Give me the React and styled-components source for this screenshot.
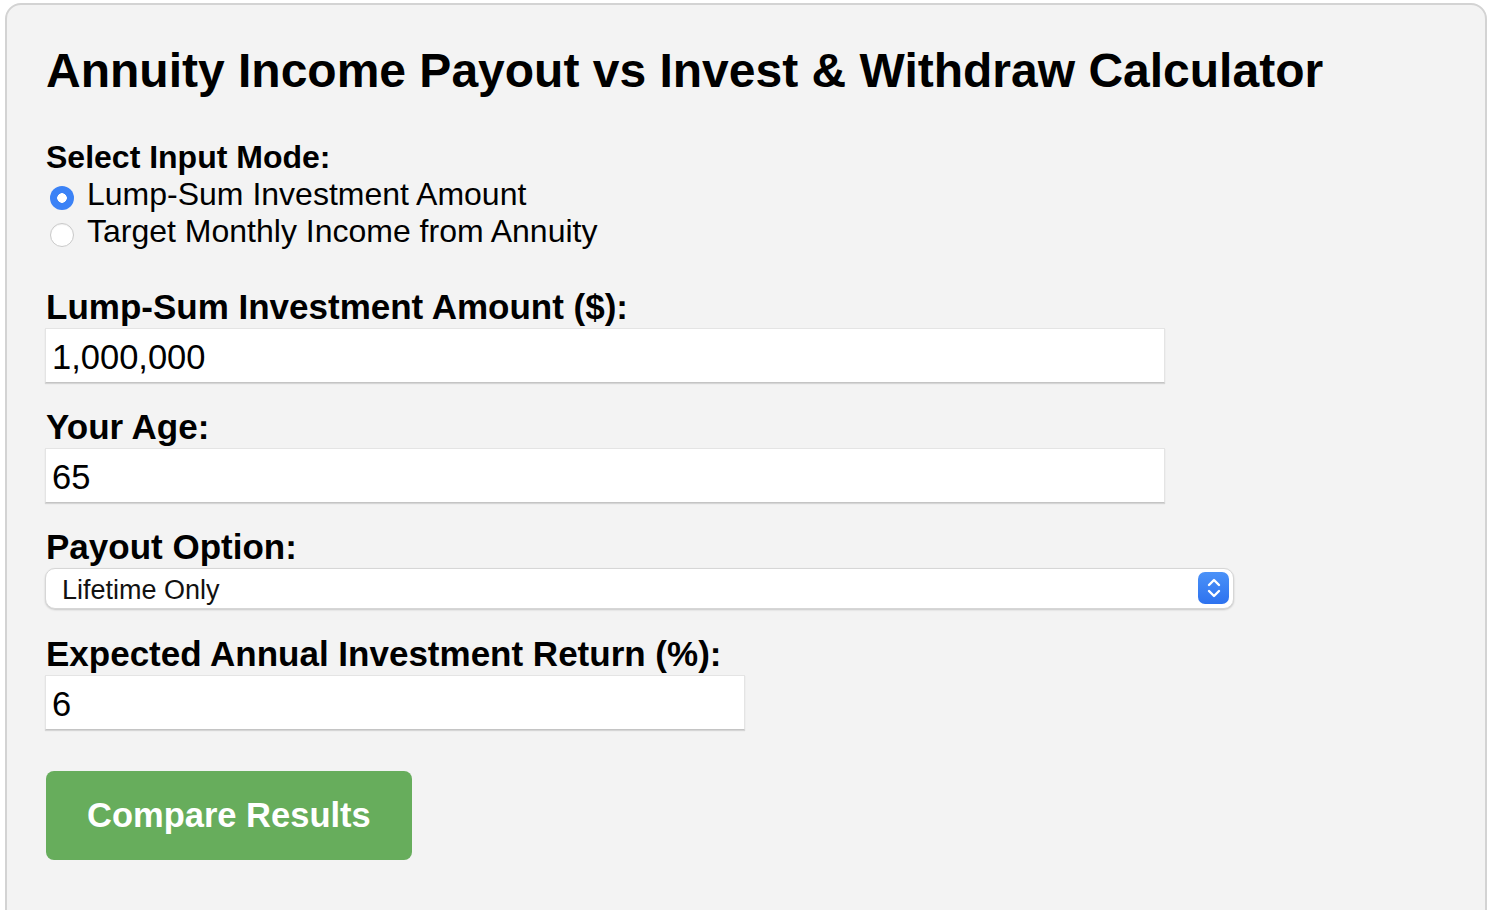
import React, { useState } from 'react'
import styled, { createGlobalStyle } from 'styled-components';

const GlobalStyle = createGlobalStyle`
    body {
        margin: 0;
        background: #ffffff;
        font-family: "Liberation Sans", Arial, sans-serif;
        color: #000;
    }
`;
const Card = styled.div`
    margin: 3px 7px 0 5px;
    min-height: 960px;
    box-sizing: border-box;
    border: 2px solid #d3d3d3;
    border-radius: 16px;
    background: #f3f3f3;
    padding: 38px 39px;
`;
const Title = styled.h2`
    margin: 0 0 41px;
    font-size: 48px;
    font-weight: bold;
    line-height: normal;
`;
const ModeBlock = styled.div`
    font-size: 32px;
    line-height: normal;
    margin-bottom: 37px;
`;
const ModeTitle = styled.div`
    font-weight: bold;
`;
const RadioRow = styled.label`
    display: flex;
    align-items: center;
    gap: 13px;
    padding-left: 4px;
`;
const Radio = styled.input`
    appearance: none;
    margin: 6px 0 0;
    width: 24px;
    height: 24px;
    border-radius: 50%;
    box-sizing: border-box;
    background: #fff;
    border: 1px solid #c9c9c9;
    box-shadow: inset 0 1px 1px rgba(0,0,0,0.06);
    &:checked {
        border: none;
        background: radial-gradient(circle, #fff 0 4.5px, #3b82f6 5px);
        box-shadow: none;
    }
`;
const Field = styled.div`
    margin-bottom: ${p => p.gap || 24}px;
`;
const Label = styled.label`
    display: block;
    font-size: 35px;
    font-weight: bold;
    line-height: normal;
    margin-bottom: 1px;
`;
const TextInput = styled.input`
    display: block;
    box-sizing: border-box;
    width: ${p => p.w}px;
    height: 55px;
    margin-left: -1px;
    padding: 3px 6px 0;
    font-family: "Liberation Sans", Arial, sans-serif;
    font-size: 34.5px;
    color: #000;
    background: #fff;
    border: 1px solid #e4e4e4;
    border-bottom: 1px solid #c4c4c4;
    box-shadow: 0 1px 1px rgba(0,0,0,0.12);
    outline: none;
`;
const SelectWrap = styled.div`
    position: relative;
    width: 1189px;
    margin-left: -1px;
    margin-bottom: 2px;
`;
const Select = styled.select`
    appearance: none;
    display: block;
    box-sizing: border-box;
    width: 100%;
    height: 41px;
    padding: 2px 16px 0;
    font-family: "Liberation Sans", Arial, sans-serif;
    font-size: 27px;
    color: #111;
    background: #fff;
    border: 1px solid #d6d6d6;
    border-radius: 10px;
    box-shadow: 0 1px 2px rgba(0,0,0,0.18);
    outline: none;
`;
const Stepper = styled.div`
    position: absolute;
    top: 4px;
    right: 5px;
    width: 31px;
    height: 32px;
    border-radius: 7px;
    background: linear-gradient(#4b92f8, #2d72ef);
    display: flex;
    align-items: center;
    justify-content: center;
    pointer-events: none;
`;
const Button = styled.button`
    margin-top: 17px;
    padding: 0 41px;
    height: 89px;
    border: none;
    border-radius: 8px;
    background: #67ad5c;
    color: #fff;
    font-family: "Liberation Sans", Arial, sans-serif;
    font-size: 34.5px;
    font-weight: bold;
    cursor: pointer;
`;

const App = () => {
    const [mode, setMode] = useState('lump')
    return (
        <>
            <GlobalStyle />
            <Card>
                <Title>Annuity Income Payout vs Invest &amp; Withdraw Calculator</Title>
                <ModeBlock>
                    <ModeTitle>Select Input Mode:</ModeTitle>
                    <RadioRow>
                        <Radio type="radio" name="mode" checked={mode === 'lump'} onChange={() => setMode('lump')} />
                        Lump-Sum Investment Amount
                    </RadioRow>
                    <RadioRow>
                        <Radio type="radio" name="mode" checked={mode === 'income'} onChange={() => setMode('income')} />
                        Target Monthly Income from Annuity
                    </RadioRow>
                </ModeBlock>
                <Field>
                    <Label>Lump-Sum Investment Amount ($):</Label>
                    <TextInput w={1120} defaultValue="1,000,000" />
                </Field>
                <Field>
                    <Label>Your Age:</Label>
                    <TextInput w={1120} defaultValue="65" />
                </Field>
                <Field gap={25}>
                    <Label>Payout Option:</Label>
                    <SelectWrap>
                        <Select defaultValue="life">
                            <option value="life">Lifetime Only</option>
                            <option value="period">Lifetime with Period Certain</option>
                            <option value="joint">Joint Lifetime</option>
                        </Select>
                        <Stepper>
                            <svg width="16" height="22" viewBox="0 0 16 22" fill="none" stroke="#fff" strokeWidth="2.4" strokeLinecap="round" strokeLinejoin="round">
                                <path d="M3 8 L8 3 L13 8" />
                                <path d="M3 14 L8 19 L13 14" />
                            </svg>
                        </Stepper>
                    </SelectWrap>
                </Field>
                <Field>
                    <Label>Expected Annual Investment Return (%):</Label>
                    <TextInput w={700} defaultValue="6" />
                </Field>
                <Button>Compare Results</Button>
            </Card>
        </>
    )
}
export default App;
